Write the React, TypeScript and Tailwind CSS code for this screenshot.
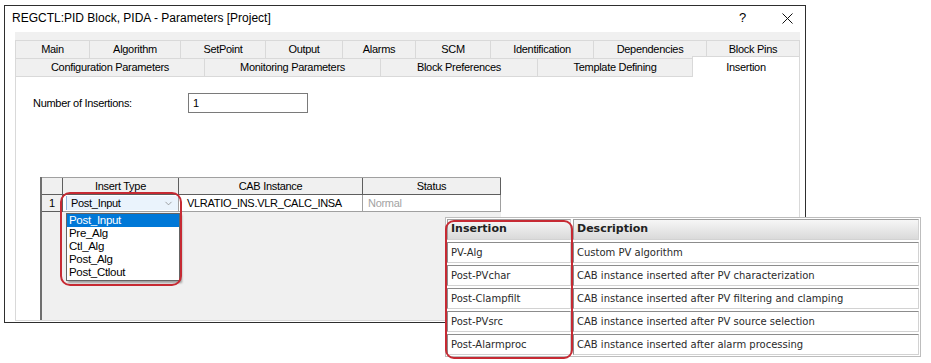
import { ChevronDown } from "lucide-react";

const row1Tabs = [
  { label: "Main", w: "w-[74px]" },
  { label: "Algorithm", w: "w-[91px]" },
  { label: "SetPoint", w: "w-[85px]" },
  { label: "Output", w: "w-[77px]" },
  { label: "Alarms", w: "w-[73px]" },
  { label: "SCM", w: "w-[75px]" },
  { label: "Identification", w: "w-[103px]" },
  { label: "Dependencies", w: "w-[113px]" },
  { label: "Block Pins", w: "w-[94px]" },
];

const row2Tabs = [
  { label: "Configuration Parameters", w: "w-[189px]" },
  { label: "Monitoring Parameters", w: "w-[176px]" },
  { label: "Block Preferences", w: "w-[157px]" },
  { label: "Template Defining", w: "w-[155px]" },
];

const insertTypes = ["Post_Input", "Pre_Alg", "Ctl_Alg", "Post_Alg", "Post_Ctlout"];

const helpRows = [
  { name: "PV-Alg", desc: "Custom PV algorithm" },
  { name: "Post-PVchar", desc: "CAB instance inserted after PV characterization" },
  { name: "Post-Clampfilt", desc: "CAB instance inserted after PV filtering and clamping" },
  { name: "Post-PVsrc", desc: "CAB instance inserted after PV source selection" },
  { name: "Post-Alarmproc", desc: "CAB instance inserted after alarm processing" },
];

const cellCls =
  "h-[21px] flex items-center pl-[3px] border border-[#d2d2d2] border-t-[#8c8c8c] border-l-[#8c8c8c] whitespace-nowrap overflow-hidden";
const headCls =
  "h-[21px] flex items-center pl-[3px] border border-[#d2d2d2] border-t-[#a0a0a0] border-l-[#a0a0a0] bg-linear-to-b from-[#f6f6f6] to-[#dadada] font-bold text-[11px] text-[#222]";

const App = () => {
  return (
    <div className="relative w-[931px] h-[363px] overflow-hidden bg-white pt-[5px] pl-[4px] font-['Liberation_Sans',Arial,sans-serif] text-black">
      {/* dialog window */}
      <div className="w-[802px] h-[318px] border border-[#2e2e2e] flex flex-col">
        <div className="h-[26px] pb-[2px] flex items-center pl-[7px] pr-[12px] text-[12px]">
          <span>REGCTL:PID Block, PIDA - Parameters [Project]</span>
          <span className="ml-auto text-[13px] w-[6px] text-center">?</span>
          <svg className="ml-[37px]" width="11" height="11" viewBox="0 0 11 11">
            <path d="M0.5 0.5 L10.5 10.5 M10.5 0.5 L0.5 10.5" stroke="#111" strokeWidth="1" />
          </svg>
        </div>

        <div className="ml-[10px] w-[785px] flex-1 mb-[1px] flex flex-col text-[11px] tracking-[-0.3px]">
          <div className="h-[8px] bg-[#f0f0f0]" />
          <div className="h-[18px] flex bg-[#f0f0f0]">
            {row1Tabs.map((t, i) => (
              <div
                key={t.label}
                className={`${t.w} h-full flex items-center justify-center border-t border-l border-[#d9d9d9] ${i === row1Tabs.length - 1 ? "border-r" : ""}`}
              >
                {t.label}
              </div>
            ))}
          </div>
          <div className="h-[18px] flex bg-[#f0f0f0]">
            {row2Tabs.map((t) => (
              <div
                key={t.label}
                className={`${t.w} h-full flex items-center justify-center border-t border-l border-[#d9d9d9]`}
              >
                {t.label}
              </div>
            ))}
            <div className="w-[108px] h-[21px] -mt-[2px] relative z-10 bg-white border border-b-0 border-[#d9d9d9] flex justify-center pt-[2px]">
              Insertion
            </div>
          </div>

          {/* tab page */}
          <div className="flex-1 bg-white border border-[#d9d9d9] flex flex-col">
            <div className="mt-[16px] ml-[17px] flex items-center">
              <span className="w-[155px]">Number of Insertions:</span>
              <div className="w-[120px] h-[20px] border border-[#7a7a7a] flex items-center px-[4px]">1</div>
            </div>

            {/* grid */}
            <div className="mt-[64px] ml-[24px] w-[461px] flex-1 relative bg-[#f0f0f0] border-l-2 border-[#6f6f6f] flex flex-col">
              <div className="h-[18px] flex border-t border-[#a0a0a0]">
                <div className="w-[21px] border-r border-b border-[#5e5e5e]" />
                <div className="w-[116px] flex items-center justify-center border-r border-b border-[#5e5e5e]">Insert Type</div>
                <div className="w-[184px] flex items-center justify-center border-r border-b border-[#5e5e5e]">CAB Instance</div>
                <div className="w-[138px] flex items-center justify-center border-r border-b border-[#5e5e5e]">Status</div>
              </div>
              <div className="h-[17px] flex">
                <div className="w-[21px] flex items-center justify-center border-r border-b border-[#5e5e5e]">1</div>
                <div className="w-[116px] bg-white border-r border-b border-[#a0a0a0] pl-[3px] py-[1px]">
                  <div className="h-full bg-[#eaf3fc] border-l border-[#8fb7e0] flex items-center pl-[4px] pr-[4px]">
                    <span>Post_Input</span>
                    <ChevronDown className="ml-auto text-[#7d7d7d]" size={11} strokeWidth={1.5} />
                  </div>
                </div>
                <div className="w-[184px] bg-white border-r border-b border-[#a0a0a0] flex items-center pl-[8px] whitespace-nowrap overflow-hidden">
                  VLRATIO_INS.VLR_CALC_INSA
                </div>
                <div className="w-[138px] bg-white border-r border-b border-[#a0a0a0] flex items-center pl-[5px] text-[#a3a3a3]">
                  Normal
                </div>
              </div>

              {/* open dropdown list */}
              <div className="absolute left-[24px] top-[36px] w-[114px] h-[68px] bg-white border border-[#646464] shadow-[2px_2px_2px_rgba(0,0,0,0.35)] flex flex-col">
                {insertTypes.map((t, i) => (
                  <div
                    key={t}
                    className={`h-[13px] leading-[13px] pl-[2px] text-[11.5px] ${i === 0 ? "bg-[#0078d7] text-white" : ""}`}
                  >
                    {t}
                  </div>
                ))}
              </div>

              {/* red highlight */}
              <div className="absolute left-[18px] top-[15px] w-[122px] h-[94px] border-2 border-[#c62a33] rounded-[10px]" />
            </div>
          </div>
        </div>
      </div>

      {/* help table overlay */}
      <div className="absolute left-[445px] top-[217px] w-[476px] h-[140px] bg-white border border-[#bdbdbd] p-[1px] font-['DejaVu_Sans',Verdana,sans-serif] text-[10px] text-[#2a2a2a]">
        <div className="grid grid-cols-[124px_1fr] gap-[2px]">
          <div className={headCls}>Insertion</div>
          <div className={headCls}>Description</div>
          {helpRows.map((r) => (
            <div key={r.name} className="contents">
              <div className={cellCls}>{r.name}</div>
              <div className={cellCls}>{r.desc}</div>
            </div>
          ))}
        </div>
        <div className="absolute -left-[1px] top-[2px] w-[128px] h-[139px] border-2 border-[#c62a33] rounded-[9px]" />
      </div>
    </div>
  );
};

export default App;
